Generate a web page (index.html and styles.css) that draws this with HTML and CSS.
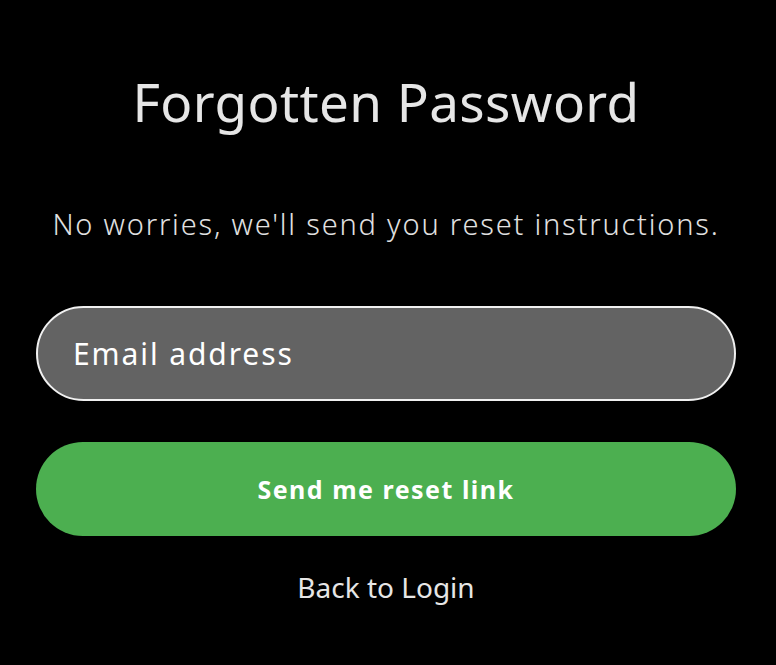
FILE: index.html
```html
<!DOCTYPE html>
<html>
<head>
<meta charset="utf-8">
<link rel="stylesheet" href="styles.css">
</head>
<body>
<main class="card">
  <h1 class="title">Forgotten Password</h1>
  <p class="subtitle">No worries, we'll send you reset instructions.</p>
  <form class="form">
    <input class="email" type="email" placeholder="Email address">
    <button class="submit" type="button">Send me reset link</button>
  </form>
  <a class="back" href="#">Back to Login</a>
</main>
</body>
</html>
```
FILE: styles.css
```css
html, body {
  margin: 0;
  padding: 0;
  background: #000;
}
body {
  font-family: "Noto Sans", "Open Sans", sans-serif;
  color: #e6e6e6;
}
.card {
  display: flex;
  flex-direction: column;
  align-items: center;
  padding: 66px 40px 0 36px;
}
.title {
  margin: 0;
  font-size: 53px;
  font-weight: 400;
  line-height: 72px;
  letter-spacing: 0.4px;
  color: #e6e6e6;
}
.subtitle {
  margin: 66px 0 0;
  font-size: 29px;
  font-weight: 300;
  line-height: 40px;
  letter-spacing: 1.8px;
  color: #e0e0e0;
}
.form {
  width: 700px;
  margin-top: 62px;
  display: flex;
  flex-direction: column;
  gap: 41px;
}
.email {
  box-sizing: border-box;
  height: 95px;
  width: 100%;
  border: 2px solid #f0f0f0;
  border-radius: 48px;
  background: #636363;
  padding: 0 35px;
  font-family: inherit;
  font-size: 30px;
  letter-spacing: 1.9px;
  color: #fff;
  outline: none;
}
.email::placeholder {
  color: #fff;
  opacity: 1;
}
.submit {
  height: 94px;
  width: 100%;
  border: none;
  border-radius: 47px;
  background: #4caf50;
  color: #fff;
  font-family: inherit;
  font-size: 25px;
  font-weight: 700;
  letter-spacing: 1.5px;
}
.back {
  margin-top: 33px;
  font-size: 28px;
  line-height: 36px;
  color: #e6e6e6;
  text-decoration: none;
}
```
